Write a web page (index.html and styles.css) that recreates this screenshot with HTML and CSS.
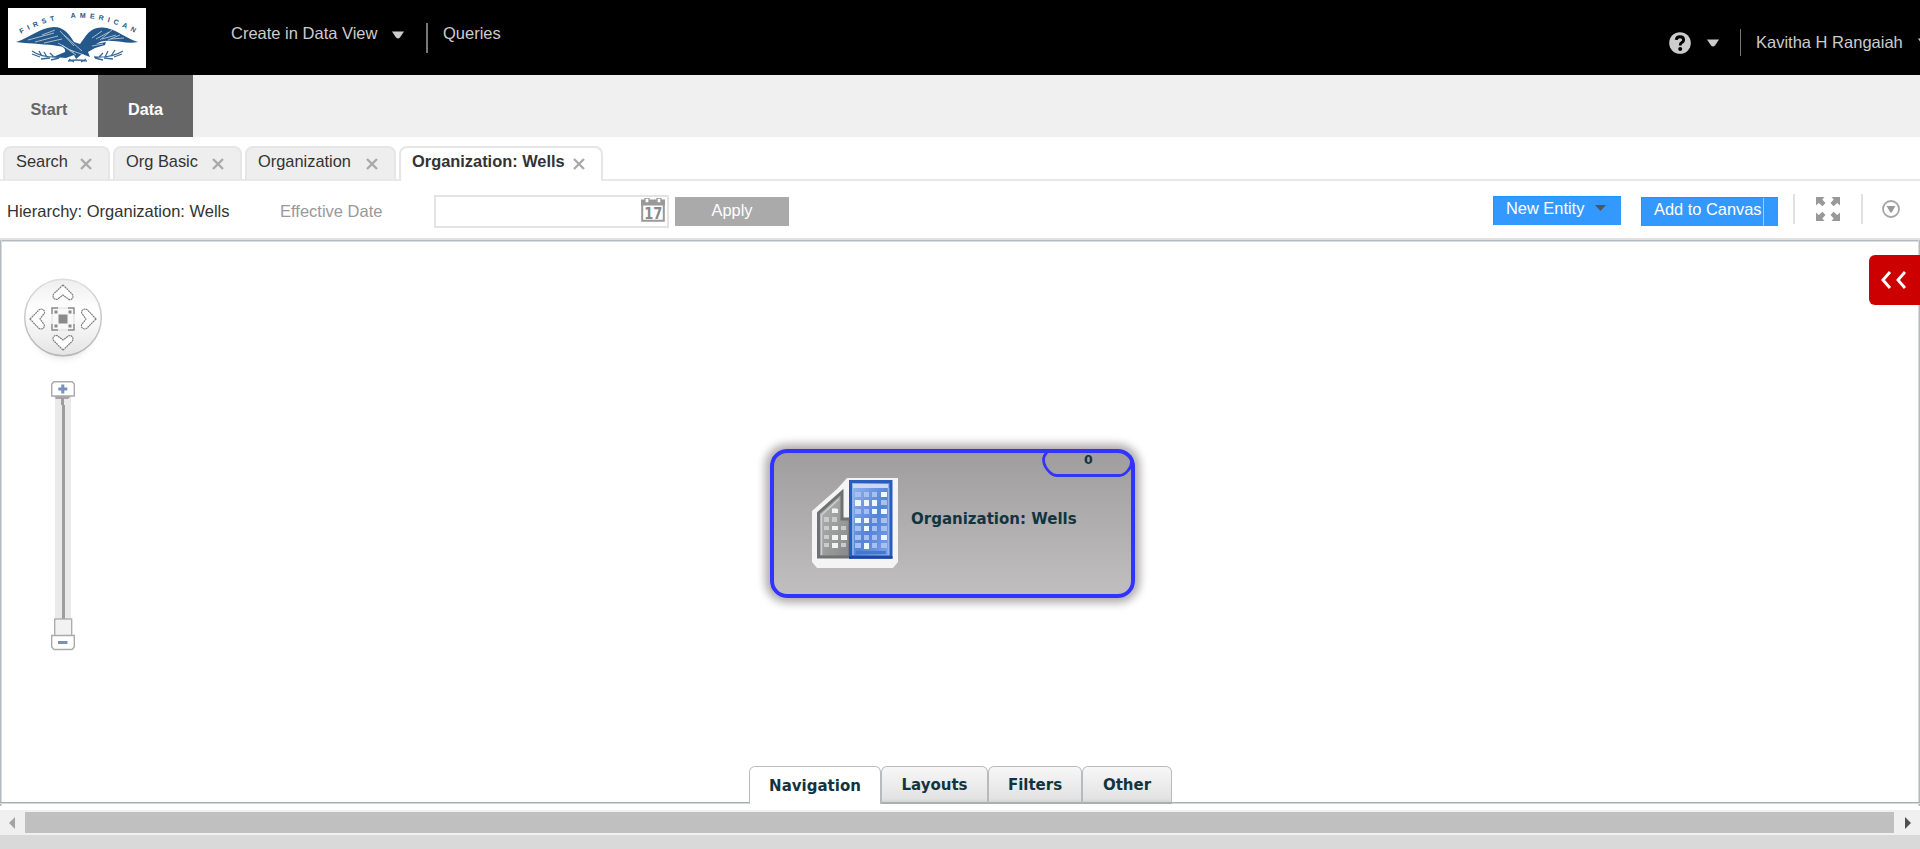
FILE: index.html
```
<!DOCTYPE html>
<html lang="en">
<head>
<meta charset="utf-8">
<title>Hierarchy: Organization: Wells</title>
<link rel="stylesheet" href="styles.css">
</head>
<body>
<header class="header">
  <svg class="logo" viewBox="0 0 138 60">
    <defs><path id="arc" d="M13 26 Q69 -6 127 25"/></defs>
    <text class="logo-text"><textPath href="#arc" textLength="119">FIRST&#160; AMERICAN</textPath></text>
    <g fill="#24588a">
      <path d="M8 34 C22 30 30 20 46 19 C56 19 61 26 66 34 L72 36 C78 28 82 19 94 19.500 C108 20 116 30 130 34 C120 36 112 33 104 33 C98 32 92 33 88 36 L98 34 L97 37 L87 40 L80 44 L82 49 L74 46 L68 51 L66 47 L58 50 L45 49 L57 44 C58 41 55 38 50 38 C38 36 25 36 8 34Z"/>
    </g>
    <g fill="none" stroke="#dce6ef" stroke-width=".7">
      <path d="M20 32 L46 25 M27 34 L50 28 M36 35 L54 31 M34 27 L47 22 M50 35 L66 44 M56 27 L74 43 M52 23 L66 38 M62 42 L76 47 M84 30 L94 23 M88 31 L101 24 M94 31 L108 27 M103 31 L116 30 M84 38 L95 36 M92 32 L104 22 M100 32 L112 27 M54 37 L68 47"/>
    </g>
    <g fill="none" stroke="#3a6996" stroke-width="1.300">
      <path d="M24 43 Q34 50 52 49 M86 49 Q104 50 115 43 M24 46 l8 3 M31 43 l3 5 M36 44 l3 5 M33 51 l9 -1 M42 45 l4 4 M43 52 l8 -2 M114 46 l-8 3 M107 42 l-4 6 M100 43 l-3 6 M105 51 l-9 -1 M95 45 l-4 4 M95 52 l-8 -2 M60 53 Q69 51 79 53 M61 51 l5 3 M78 51 l-5 3"/>
    </g>
  </svg>
  <span class="h-create">Create in Data View</span>
  <svg class="h-caret" viewBox="0 0 12 8"><path d="M0 0.500H12L8 6.500Q6 8.500 4 6.500Z"/></svg>
  <i class="h-sep"></i>
  <span class="h-queries">Queries</span>
  <div class="h-right">
    <svg class="help" viewBox="0 0 22 22"><circle cx="11" cy="11" r="10.800" fill="#ccc"/><path d="M7.300 7.800Q7.500 4.800 11 4.800Q14.600 4.800 14.600 7.800Q14.600 9.800 12.500 10.700Q11.200 11.400 11.200 13.500" fill="none" stroke="#000" stroke-width="2.900"/><circle cx="11.200" cy="17" r="2"/></svg>
    <svg class="h-caret u-caret" viewBox="0 0 12 8"><path d="M0 0.500H12L8 6.500Q6 8.500 4 6.500Z"/></svg>
    <i class="u-sep"></i>
    <span class="user">Kavitha H Rangaiah</span>
    <svg class="h-caret end-caret" viewBox="0 0 12 8"><path d="M0 0.500H12L8 6.500Q6 8.500 4 6.500Z"/></svg>
  </div>
</header>
<nav class="nav">
  <a class="nav-item start"><span>Start</span></a>
  <a class="nav-item data"><span>Data</span></a>
</nav>
<div class="tabs">
  <div class="tab t1"><span>Search</span><svg class="x" viewBox="0 0 12 12"><path d="M1 1L11 11M11 1L1 11"/></svg></div>
  <div class="tab t2"><span>Org Basic</span><svg class="x" viewBox="0 0 12 12"><path d="M1 1L11 11M11 1L1 11"/></svg></div>
  <div class="tab t3"><span>Organization</span><svg class="x" viewBox="0 0 12 12"><path d="M1 1L11 11M11 1L1 11"/></svg></div>
  <div class="tab t4"><span>Organization: Wells</span><svg class="x" viewBox="0 0 12 12"><path d="M1 1L11 11M11 1L1 11"/></svg></div>
</div>
<div class="toolbar">
  <span class="crumb">Hierarchy: Organization: Wells</span>
  <span class="eff">Effective Date</span>
  <div class="date">
    <svg viewBox="0 0 24 24" class="cal"><path d="M1.200 2V22.800H22.800V2" fill="#fff" stroke="#999" stroke-width="2"/><path d="M0 1.500H24V7.500H0Z" fill="#999"/><path d="M4 0H8V5H4ZM16 0H20V5H16Z" fill="#fff" stroke="#999" stroke-width="1.300"/><text x="3.200" y="20.500" textLength="18" lengthAdjust="spacingAndGlyphs">17</text></svg>
  </div>
  <button class="apply">Apply</button>
  <div class="tools">
    <button class="entity"><span>New Entity</span><svg viewBox="0 0 11 6"><path d="M0 0H11L5.500 6Z" fill="#555"/></svg></button>
    <button class="add"><span>Add to Canvas</span></button>
    <i class="t-sep"></i>
    <svg class="expand" viewBox="0 0 24 24"><g id="q"><path d="M0 0H8.500L6.300 2.500L9.500 6L6.500 9.200L2.800 6L0 8.500Z"/></g><use href="#q" transform="matrix(-1 0 0 1 24 0)"/><use href="#q" transform="matrix(1 0 0 -1 0 24)"/><use href="#q" transform="matrix(-1 0 0 -1 24 24)"/></svg>
    <i class="t-sep s2"></i>
    <svg class="more" viewBox="0 0 18 18"><circle cx="9" cy="9" r="8" fill="none" stroke="#a5a5a5" stroke-width="1.800"/><path d="M4.600 6H13.400L10 12Q9 13 8 12Z" fill="#999"/></svg>
  </div>
</div>
<main class="canvas">
  <svg class="compass" viewBox="0 0 80 90">
    <defs><linearGradient id="cg" x2="0" y2="1"><stop offset="0" stop-color="#eee"/><stop offset=".4" stop-color="#fff"/><stop offset="1" stop-color="#e4e4e4"/></linearGradient>
    <linearGradient id="cs" x2="0" y2="1"><stop offset="0" stop-color="#ddd"/><stop offset="1" stop-color="#b5b5b5"/></linearGradient>
    <radialGradient id="sh"><stop offset=".75" stop-color="#ccc"/><stop offset="1" stop-color="#fff" stop-opacity="0"/></radialGradient></defs>
    <ellipse cx="40" cy="46" rx="40" ry="42" fill="url(#sh)" opacity=".5"/>
    <circle cx="40" cy="39.500" r="38.300" fill="url(#cg)" stroke="url(#cs)" stroke-width="1.500"/>
    <g fill="#fff" stroke="#808080" stroke-width="1.200" stroke-dasharray="2 .5">
      <path id="ar" d="M40 7L49.500 16.500Q51 19.500 48 21.500Q45.500 22 44 20L40 17L36 20Q33.500 22.500 31 20.500Q29 18 31 15.500Z"/>
      <use href="#ar" transform="translate(0 1) rotate(90 40 40)"/><use href="#ar" transform="rotate(180 40 39.500)"/><use href="#ar" transform="translate(0 1) rotate(-90 40 40)"/>
    </g>
    <rect x="29" y="30" width="22" height="22" fill="#f8f8f8" stroke="#ddd" stroke-width="1"/>
    <path d="M29 36V30H35M45 30H51V36M51 46V52H45M35 52H29V46" fill="none" stroke="#8c8c8c" stroke-width="1.400"/>
    <path d="M35.500 36.500H44.500V45.500H35.500ZM31.500 32.500h3v3h-3ZM45.500 32.500h3v3h-3ZM31.500 46.500h3v3h-3ZM45.500 46.500h3v3h-3Z" fill="#8a8a8a"/>
  </svg>
  <svg class="slider" viewBox="0 0 26 270">
    <rect x="5" y="16" width="16" height="224" fill="#eaeaea"/>
    <path d="M4 15H21L18 18H6Z" fill="#a5a5a5"/>
    <path d="M11 17H14V24H15V238H12V24H11Z" fill="#9d9d9d"/>
    <path d="M4 .7H22L24.300 3V15H1.700V3Z" fill="#fff" stroke="#aaa" stroke-width="1.400"/>
    <path d="M11.300 3.500h3v3h3v3h-3v3h-3v-3h-3v-3h3Z" fill="#7890bd"/>
    <rect x="4.700" y="238" width="17" height="18" fill="#f2f2f2" stroke="#aaa" stroke-width="1.300"/>
    <path d="M1.700 254.500H24.300V266L22 268.500H4L1.700 266Z" fill="#fff" stroke="#aaa" stroke-width="1.400"/>
    <rect x="8" y="260" width="9.500" height="3" fill="#7890bd"/>
  </svg>
  <button class="drawer"><svg viewBox="0 0 26 18"><path d="M10 1L3 9L10 17M25 1L18 9L25 17" fill="none" stroke="#fff" stroke-width="2.900"/></svg></button>
  <article class="node">
    <svg class="building" viewBox="0 0 86 90">
      <defs>
        <linearGradient id="bl" x2="1" y2="1"><stop offset="0" stop-color="#9ab8ee"/><stop offset=".55" stop-color="#5483d7"/><stop offset="1" stop-color="#7fa6ea"/></linearGradient>
        <linearGradient id="gr" x2="1" y2="1"><stop offset="0" stop-color="#b5b5b5"/><stop offset="1" stop-color="#858888"/></linearGradient>
      </defs>
      <path d="M35 0H86V84L81 90H5L0 84V33L25 11Z" fill="#f4f4f4"/>
      <path d="M6.500 79V35L30 14V41H38V79Z" fill="url(#gr)" stroke="#6e7171" stroke-width="3"/>
      <path d="M9.500 77V37L27 21" fill="none" stroke="#cfcfcf" stroke-width="1.500"/>
      <g fill="#c8cccc"><path d="M20 30h5v5h-5ZM12 39h5v5h-5ZM29 48h5v4h-5ZM20 39h5v5h-5ZM12 48h5v4h-5ZM12 57h5v4h-5ZM12 65h5v4h-5ZM29 65h5v4h-5Z"/></g>
      <g fill="#f2f2f2"><path d="M20 31h6v4h-6ZM20 48h6v4h-6ZM29 57h6v5h-6ZM20 57h6v5h-6ZM20 65h6v5h-6Z"/></g>
      <path d="M38.500 3.500H79V79H38.500Z" fill="url(#bl)" stroke="#2a5cbe" stroke-width="3"/>
      <path d="M37 79.500H80.500" stroke="#1845a5" stroke-width="2.500"/>
      <path d="M41 6H76.500V10H41Z" fill="#ced8f1"/><path d="M41 10V77M76.500 10V77" fill="none" stroke="#94b4ed" stroke-width="1.500"/><path d="M44 73H74V76H44Z" fill="#4676cf"/>
      <g class="wl"><path d="M43 14h6v5h-6ZM52 14h5v5h-5ZM60 14h5v5h-5ZM69 22h6v5h-6ZM43 31h6v5h-6ZM52 31h5v5h-5ZM60 40h5v5h-5ZM69 40h6v5h-6ZM43 48h6v5h-6ZM60 48h5v5h-5ZM69 48h6v5h-6ZM43 57h6v5h-6ZM52 57h5v5h-5ZM60 57h5v5h-5ZM43 65h6v5h-6ZM60 65h5v5h-5ZM69 65h6v5h-6Z"/></g>
      <g fill="#f1f5ff"><path d="M69 14h6v5h-6ZM43 22h6v6h-6ZM52 22h5v6h-5ZM60 22h5v6h-5ZM60 31h5v5h-5ZM69 31h6v5h-6ZM43 40h6v5h-6ZM52 40h5v5h-5ZM52 48h5v5h-5ZM69 57h6v5h-6ZM52 65h5v6h-5Z"/></g>
    </svg>
    <span class="node-title">Organization: Wells</span>
    <svg class="badge" viewBox="0 0 92 30"><path d="M5 1Q1.500 5 1.500 9Q2 16 8 21.500Q11 24.500 15 24.500H77Q82 24.500 86 19.500Q92 13 88 5" fill="none" stroke="#3333fb" stroke-width="2.800"/></svg>
    <span class="count">0</span>
  </article>
  <div class="bottom-tabs">
    <i class="line-l"></i>
    <div class="bt nav-t"><span>Navigation</span></div>
    <div class="bt lay-t"><span>Layouts</span></div>
    <div class="bt fil-t"><span>Filters</span></div>
    <div class="bt oth-t"><span>Other</span></div>
    <i class="line-r"></i>
  </div>
</main>
<div class="scroll">
  <svg viewBox="0 0 6 12"><path d="M6 0V12L0 6Z" fill="#a3a3a3"/></svg>
  <div class="thumb"></div>
  <svg viewBox="0 0 6 12"><path d="M0 0V12L6 6Z" fill="#505050"/></svg>
</div>
</body>
</html>
```
FILE: styles.css
```
* { box-sizing: border-box; }
body { margin: 0; width: 1920px; height: 849px; overflow: hidden; background: #d9d9d9; font: 16.400px/20px "Liberation Sans", Arial, sans-serif; display: flex; flex-direction: column; color: #333; }
span { white-space: nowrap; flex: none; display: block; }
svg, i { display: block; flex: none; }
button { border: 0; padding: 0; font: inherit; color: #fff; border-radius: 0; text-align: left; }

.header { height: 75px; flex: none; background: #000; color: #ccc; display: flex; align-items: flex-start; padding-left: 8px; }
.logo { width: 138px; height: 60px; background: #fff; margin-top: 8px; }
.logo-text { font: bold 7px "Liberation Sans", sans-serif; fill: #24588a; }
.h-create { margin: 23px 0 0 85px; width: 161px; font-size: 16.500px; }
.h-caret { width: 12px; height: 8px; margin-top: 31px; fill: #ccc; }
.h-sep { width: 2px; height: 30px; margin: 23px 0 0 22px; background: #777; }
.h-queries { margin: 23px 0 0 15px; font-size: 16.500px; }
.h-right { margin-left: auto; width: 251px; height: 75px; display: flex; overflow: hidden; }
.help { width: 22px; height: 22px; margin-top: 32px; }
.u-caret { margin: 39px 0 0 16px; }
.u-sep { width: 1px; height: 27px; margin: 29px 0 0 21px; background: #777; }
.user { width: 162px; margin: 32px 0 0 15px; font-size: 16.500px; }
.end-caret { margin-top: 38px; margin-left: 0; }

.nav { height: 62px; flex: none; background: #f0f0f0; display: flex; font-weight: bold; font-size: 16.200px; }
.nav-item { display: flex; align-items: center; justify-content: center; padding-top: 6px; }
.start { width: 98px; color: #666; }
.data { width: 95px; background: #666; color: #fff; }

.tabs { height: 44px; flex: none; background: linear-gradient(#e9e9e9, #e9e9e9) 0 100% / 100% 2px no-repeat #fff; display: flex; align-items: flex-end; padding-left: 3px; gap: 3px; }
.tab { height: 35px; background: #eee; border: 2px solid #e6e6e6; border-radius: 8px 8px 0 0; display: flex; padding-left: 11px; border-bottom-color: #e9e9e9; }
.tab span { margin-top: 3px; }
.t1 { width: 107px; } .t1 span { width: 64px; }
.t2 { width: 129px; } .t2 span { width: 86px; }
.t3 { width: 151px; } .t3 span { width: 108px; }
.t4 { width: 204px; background: #fff; border-bottom: 0; font-weight: bold; } .t4 span { width: 161px; }
.x { width: 12px; height: 12px; margin-top: 10px; stroke: #aaa; stroke-width: 2.400; fill: none; }

.toolbar { height: 57px; flex: none; background: #fff; display: flex; padding-left: 7px; }
.crumb { width: 273px; margin-top: 20px; font-size: 16.500px; }
.eff { width: 154px; margin-top: 20px; color: #999; font-size: 16.500px; }
.date { width: 235px; height: 33px; margin-top: 14px; border: 2px solid #e3e3e3; display: flex; justify-content: flex-end; padding: 1px 2px 0 0; }
.cal { width: 24px; height: 24px; font: bold 15px "DejaVu Sans", sans-serif; fill: #8a8a8a; }
.apply { margin: 16px 0 0 6px; width: 114px; height: 29px; background: #aaa; padding-bottom: 4px; text-align: center; }
.tools { margin-left: auto; width: 427px; display: flex; }
.entity { width: 128px; height: 29px; margin-top: 15px; background: #39f; display: flex; justify-content: flex-start; padding: 1px 0 0 12px; border-left: 1px solid #1a98ff; border-top: 1px solid #1a98ff; }
.entity span { width: 89px; margin-top: 0; }
.entity svg { width: 11px; height: 6px; margin-top: 7px; }
.add { width: 137px; height: 29px; margin: 16px 0 0 20px; background: #39f; display: flex; padding-left: 12px; border-left: 1px solid #1a98ff; border-top: 1px solid #1a98ff; }
.add span { width: 110px; height: 28px; padding-top: 1px; border-right: 1px solid #9cf; }
.t-sep { width: 2px; height: 30px; background: #e1e1e1; margin: 13px 0 0 15px; }
.expand { width: 24px; height: 24px; margin: 16px 0 0 21px; fill: #999; }
.s2 { margin-left: 21px; }
.more { width: 18px; height: 18px; margin: 19px 0 0 19px; }

.canvas { height: 572px; flex: none; background: #fff; position: relative; border-top: 2px solid #e0e1e2; box-shadow: inset 0 1px #b4b9be, inset 0 2px #d9dbde; font-family: "DejaVu Sans", Verdana, sans-serif; font-weight: bold; color: #113540; }
.canvas::before { content: ""; position: absolute; left: 0; right: 0; top: 0; height: 566px; border-left: 1px solid #b4b9be; border-right: 1px solid #b4b9be; box-shadow: inset 1px 0 #d9dbde, inset -1px 0 #d9dbde; }
.compass { position: absolute; left: 23px; top: 38px; width: 80px; height: 90px; }
.slider { position: absolute; left: 50px; top: 141px; width: 26px; height: 270px; }
.drawer { position: absolute; right: 0; top: 15px; width: 51px; height: 50px; background: #c00; border-radius: 6px 0 0 6px; padding: 0 0 0 11px; }
.drawer svg { width: 26px; height: 18px; }
.node { position: absolute; left: 770px; top: 209px; width: 365px; height: 149px; border: 4px solid #33f; border-radius: 17px; background: linear-gradient(#9f9d9e, #c0bebf); box-shadow: 0 0 9px 5px #b0adae; display: flex; }
.building { width: 86px; height: 90px; margin: 25px 0 0 38px; }
.wl { fill: #a8c0ef; }
.node-title { margin: 56px 0 0 13px; font-size: 15px; }
.badge { position: absolute; left: 268px; top: -2px; width: 92px; height: 30px; }
.count { position: absolute; left: 310px; top: -3px; font-size: 12.500px; }
.bottom-tabs { position: absolute; left: 0; right: 0; top: 526px; height: 38px; display: flex; font-size: 15px; }
.line-l, .line-r { height: 2px; align-self: flex-end; background: linear-gradient(#a8b0b3 50%, #d5d9db 50%); }
.line-l { width: 749px; } .line-r { flex: 1; }
.bt { border: 1px solid #b7bbbd; border-top: 1px solid #bbb; border-radius: 6px 6px 0 0; background: linear-gradient(#f7f7f7, #e3e3e3 90%, #d5d5d5); display: flex; justify-content: center; padding-top: 8px; border-bottom: 2px solid #a8b0b3; }
.nav-t { width: 132px; background: #fff; border-bottom: 0; padding-top: 9px; }
.lay-t { width: 107px; } .fil-t { width: 94px; } .oth-t { width: 90px; }

.scroll { height: 25px; flex: none; background: #f0f0f0; display: flex; align-items: center; padding: 0 9px; justify-content: space-between; }
.scroll svg { width: 6px; height: 12px; }
.thumb { width: 1869px; height: 21px; background: #c0c0c0; margin: 0 1px 0 0; }
```
